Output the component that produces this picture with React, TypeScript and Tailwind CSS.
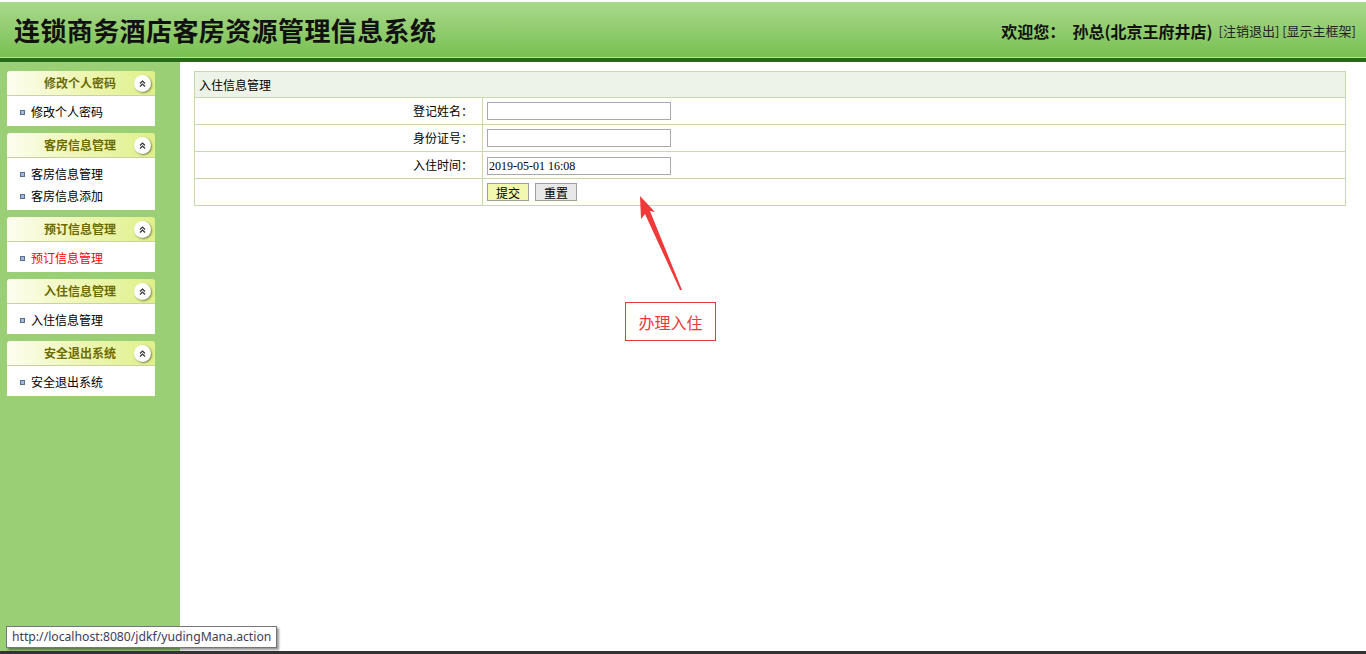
import { ReactNode } from "react";

const cjk = "font-['SimSun','Noto_Sans_CJK_SC',sans-serif]";

interface MenuPanelProps {
  title: string;
  items: { text: string; active?: boolean }[];
}

const CollapseIcon = () => (
  <span className="flex h-[17px] w-[17px] items-center justify-center rounded-full bg-white shadow-[1px_1px_2px_rgba(0,0,0,0.45)]">
    <svg width="9" height="9" viewBox="0 0 9 9" fill="none" stroke="#333" strokeWidth="1.2">
      <path d="M2 4.5 L4.5 2 L7 4.5" />
      <path d="M2 7.5 L4.5 5 L7 7.5" />
    </svg>
  </span>
);

const MenuPanel = ({ title, items }: MenuPanelProps) => (
  <div className="w-[148px]">
    <div className="relative flex h-[25px] items-center justify-center rounded-t-[3px] border-b border-[#c9d2a6] bg-gradient-to-r from-[#fdfdf0] via-[#eef6b4] to-[#dff08a]">
      <span className="pr-[2px] text-[12px] font-bold text-[#6b6b00]">{title}</span>
      <span className="absolute right-[4px] top-[4px]">
        <CollapseIcon />
      </span>
    </div>
    <ul className="flex flex-col gap-[4px] bg-white pb-[5px] pt-[7px]">
      {items.map((item) => (
        <li key={item.text} className="flex h-[18px] items-center pl-[13px]">
          <span className="mr-[6px] h-[5px] w-[5px] border border-[#5a6f8c] bg-[#9cb8e0]" />
          <span className={`text-[12px] ${item.active ? "text-[#ff0000]" : "text-black"}`}>
            {item.text}
          </span>
        </li>
      ))}
    </ul>
  </div>
);

const FormRow = ({ label, children }: { label: string; children: ReactNode }) => (
  <tr className="h-[27px]">
    <td className="w-[288px] border border-[#c8d8a8] pr-[9px] text-right text-[12px] text-black">{label}</td>
    <td className="border border-[#c8d8a8] pl-[4px] text-[12px]">{children}</td>
  </tr>
);

export default function App() {
  return (
    <div className={`relative flex h-[654px] w-[1366px] flex-col overflow-hidden bg-white ${cjk}`}>
      <div className="h-[2px] bg-white" />
      <header className="flex h-[55px] items-center justify-between bg-gradient-to-b from-[#aad98c] to-[#78c04f] pl-[14px] pr-[10px]">
        <h1 className="text-[26px] font-bold tracking-[0.4px] text-[#111] font-['SimHei','Noto_Sans_CJK_SC',sans-serif]">
          连锁商务酒店客房资源管理信息系统
        </h1>
        <div className="flex items-center gap-[6px] pt-[2px]">
          <span className="text-[16px] font-bold text-[#111]">欢迎您：&nbsp;&nbsp;孙总(北京王府井店)</span>
          <span className="text-[13px] text-[#222]">[注销退出] [显示主框架]</span>
        </div>
      </header>
      <div className="h-[1px] bg-[#b4e496]" />
      <div className="h-[4px] bg-[#256a17]" />

      <div className="flex flex-1">
        <aside className="flex w-[180px] flex-col gap-[7px] bg-[#9bcf76] pl-[7px] pt-[9px]">
          <MenuPanel title="修改个人密码" items={[{ text: "修改个人密码" }]} />
          <MenuPanel title="客房信息管理" items={[{ text: "客房信息管理" }, { text: "客房信息添加" }]} />
          <MenuPanel title="预订信息管理" items={[{ text: "预订信息管理", active: true }]} />
          <MenuPanel title="入住信息管理" items={[{ text: "入住信息管理" }]} />
          <MenuPanel title="安全退出系统" items={[{ text: "安全退出系统" }]} />
        </aside>

        <main className="flex-1 pl-[14px] pr-[20px] pt-[9px]">
          <table className="w-full border-collapse border border-[#c8d8a8]">
            <tbody>
              <tr className="h-[26px] bg-[#edf3e7]">
                <td colSpan={2} className="border border-[#c8d8a8] pl-[4px] text-[12px] text-black">
                  入住信息管理
                </td>
              </tr>
              <FormRow label="登记姓名：">
                <input className="h-[18px] w-[184px] border border-[#a9a9a9] bg-white px-[1px] text-[12px] outline-none" />
              </FormRow>
              <FormRow label="身份证号：">
                <input className="h-[18px] w-[184px] border border-[#a9a9a9] bg-white px-[1px] text-[12px] outline-none" />
              </FormRow>
              <FormRow label="入住时间：">
                <input
                  defaultValue="2019-05-01 16:08"
                  className="h-[18px] w-[184px] border border-[#a9a9a9] bg-white px-[1px] text-[12px] font-['Liberation_Serif',serif] outline-none"
                />
              </FormRow>
              <FormRow label="">
                <div className="flex gap-[6px]">
                  <button className="h-[18px] w-[42px] border border-[#a0a0a0] bg-[#f3f8b0] text-[12px] text-black">提交</button>
                  <button className="h-[18px] w-[42px] border border-[#a0a0a0] bg-[#e8e8e8] text-[12px] text-black">重置</button>
                </div>
              </FormRow>
            </tbody>
          </table>
        </main>
      </div>

      <div className="h-[3px] bg-[#333]" />

      {/* annotation overlay */}
      <svg className="pointer-events-none absolute left-0 top-0" width="1366" height="654">
        <polygon
          points="640,196 655,212 650,211 682,290 680,290 645,214 641,219"
          fill="#f03a3a"
        />
      </svg>
      <div className="absolute left-[625px] top-[302px] flex h-[39px] w-[91px] items-center justify-center border border-[#e83a3a] bg-white text-[16px] text-[#e83a3a]">
        办理入住
      </div>

      {/* status tooltip */}
      <div className="absolute left-[6px] top-[626px] border border-[#767676] bg-white px-[5px] py-[1px] text-[12.2px] text-[#3c3c5a] shadow-[2px_2px_2px_rgba(0,0,0,0.4)] font-['Noto_Sans',sans-serif]">
        http://localhost:8080/jdkf/yudingMana.action
      </div>
    </div>
  );
}
